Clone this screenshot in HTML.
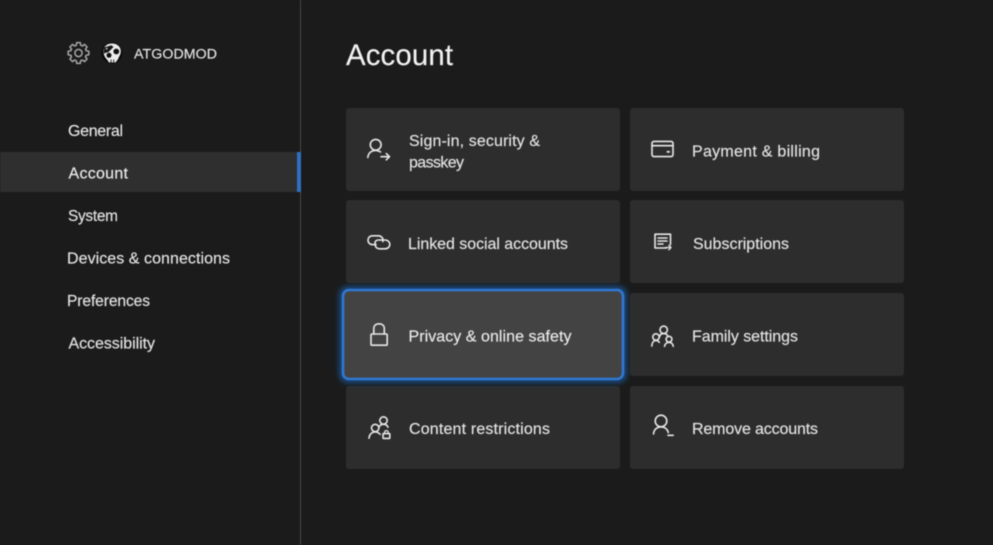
<!DOCTYPE html>
<html lang="en">
<head>
<meta charset="utf-8">
<title>Account</title>
<style>
html,body{margin:0;padding:0;width:993px;height:545px;overflow:hidden;background:#1b1b1b}
svg{display:block;filter:blur(.4px)}
text{font-family:"Liberation Sans",sans-serif;font-size:16px;fill:#e4e4e4;stroke:#e4e4e4;stroke-width:.15}
.i{fill:none;stroke:#e8e8e8;stroke-width:1.6;stroke-linecap:round;stroke-linejoin:round}
</style>
</head>
<body>
<svg width="993" height="545" viewBox="0 0 993 545" xmlns="http://www.w3.org/2000/svg">
<defs>
<filter id="glow" x="-10%" y="-20%" width="120%" height="140%"><feGaussianBlur stdDeviation="3"/></filter>
</defs>
<rect width="993" height="545" fill="#1b1b1b"/>

<!-- sidebar -->
<rect x="300" y="0" width="1" height="545" fill="#474747"/>
<rect x="0" y="152" width="300" height="40" fill="#2f2f2f"/>
<rect x="297" y="152" width="4" height="40" fill="#2f6fc4"/>

<!-- gear -->
<g class="i" style="stroke:#a8a8a8;stroke-width:1.5" transform="translate(78.5 53)">
<circle r="3.6"/>
<path d="M-2.2-7.69L-1.82-10.34L1.82-10.34L2.2-7.69A8 8 0 0 1 3.88-7"/>
<path transform="rotate(45)" d="M-2.2-7.69L-1.82-10.34L1.82-10.34L2.2-7.69A8 8 0 0 1 3.88-7"/>
<path transform="rotate(90)" d="M-2.2-7.69L-1.82-10.34L1.82-10.34L2.2-7.69A8 8 0 0 1 3.88-7"/>
<path transform="rotate(135)" d="M-2.2-7.69L-1.82-10.34L1.82-10.34L2.2-7.69A8 8 0 0 1 3.88-7"/>
<path transform="rotate(180)" d="M-2.2-7.69L-1.82-10.34L1.82-10.34L2.2-7.69A8 8 0 0 1 3.88-7"/>
<path transform="rotate(225)" d="M-2.2-7.69L-1.82-10.34L1.82-10.34L2.2-7.69A8 8 0 0 1 3.88-7"/>
<path transform="rotate(270)" d="M-2.2-7.69L-1.82-10.34L1.82-10.34L2.2-7.69A8 8 0 0 1 3.88-7"/>
<path transform="rotate(315)" d="M-2.2-7.69L-1.82-10.34L1.82-10.34L2.2-7.69A8 8 0 0 1 3.88-7"/>
</g>

<!-- avatar skull -->
<circle cx="112" cy="53" r="10.5" fill="#0a0a0a"/>
<path d="M103.5 51C103.5 46.5 107 43.5 112 43.5C117.5 43.5 121 47 120.8 51.5C120.7 55 118.7 57 117.8 59.5L115.5 62.5L109 62.5L107 59.5C105 57.5 103.5 55 103.5 51Z" fill="#ececec"/>
<path d="M104 47.5L111.5 45.2L113.5 47L108.5 52L103.8 53.5Z" fill="#141414"/>
<path d="M105 48.5L108 47.6L107 50Z" fill="#bbb"/>
<circle cx="116.3" cy="51.5" r="2.9" fill="#0e0e0e"/>
<circle cx="109" cy="55.3" r="2.5" fill="#0e0e0e"/>
<path d="M111 59.5L111 62.5M113.7 59.5L113.7 62.5" stroke="#222" stroke-width="1"/>
<text x="134" y="58.5" textLength="83" lengthAdjust="spacing" style="font-size:14.2px">ATGODMOD</text>

<!-- nav -->
<text x="68" y="136" textLength="55" lengthAdjust="spacing">General</text>
<text x="68.5" y="178.5" textLength="59.5" lengthAdjust="spacing" style="fill:#f0f0f0">Account</text>
<text x="68" y="221" textLength="50" lengthAdjust="spacing" style="font-size:15.4px">System</text>
<text x="67" y="263.5" textLength="163" lengthAdjust="spacing">Devices &amp; connections</text>
<text x="67" y="306" textLength="83" lengthAdjust="spacing" style="font-size:15.6px">Preferences</text>
<text x="68.5" y="348.5" textLength="86.5" lengthAdjust="spacing">Accessibility</text>

<!-- title -->
<text x="346" y="65" textLength="107" lengthAdjust="spacing" style="font-size:29.4px;fill:#f2f2f2;stroke:#f2f2f2">Account</text>

<!-- cards -->
<g fill="#2d2d2d">
<rect x="346" y="108" width="274" height="83" rx="3"/>
<rect x="630" y="108" width="274" height="83" rx="3"/>
<rect x="346" y="200" width="274" height="83" rx="3"/>
<rect x="630" y="200" width="274" height="83" rx="3"/>
<rect x="630" y="293" width="274" height="83" rx="3"/>
<rect x="346" y="386" width="274" height="83" rx="3"/>
<rect x="630" y="386" width="274" height="83" rx="3"/>
</g>

<!-- focused card -->
<rect x="342" y="289" width="282" height="91" rx="6" fill="none" stroke="#1f6fd0" stroke-width="5" opacity=".7" filter="url(#glow)"/>
<rect x="343" y="290" width="280" height="89" rx="6" fill="#434343" stroke="#2f78d6" stroke-width="2.6"/>

<!-- card text -->
<text x="409" y="146" textLength="131" lengthAdjust="spacing">Sign-in, security &amp;</text>
<text x="409" y="167.5" textLength="55" lengthAdjust="spacing">passkey</text>
<text x="692" y="156.5" textLength="128" lengthAdjust="spacing">Payment &amp; billing</text>
<text x="408" y="249" textLength="160" lengthAdjust="spacing">Linked social accounts</text>
<text x="693" y="249" textLength="96" lengthAdjust="spacing">Subscriptions</text>
<text x="408.5" y="341.5" textLength="163" lengthAdjust="spacing" style="fill:#ececec">Privacy &amp; online safety</text>
<text x="692" y="341.5" textLength="106" lengthAdjust="spacing">Family settings</text>
<text x="409" y="434" textLength="141" lengthAdjust="spacing">Content restrictions</text>
<text x="692" y="434" textLength="126" lengthAdjust="spacing">Remove accounts</text>

<!-- icons -->
<g class="i">
<!-- sign-in -->
<circle cx="375.7" cy="144.8" r="5.4"/>
<path d="M367.8 157.5C368.3 153.2 371.2 150.4 375.7 150.4C377.6 150.4 379.2 151 380.5 152"/>
<path d="M381 156.7H389.5M386.3 153.6L389.5 156.7L386.3 159.8"/>
<!-- linked -->
<path d="M382.8 241.5C383.6 238.4 381.6 235.8 378.5 235.8H372.5C369.8 235.8 368 237.8 368 240.2C368 242.6 369.8 244.6 372.5 244.6H376"/>
<path d="M375.2 243.4C374.6 241.4 376.4 240 378.5 240H385C387.9 240 389.8 242.1 389.8 244.4C389.8 246.8 387.9 248.8 385 248.8H380C377.4 248.8 375.7 247.3 375.2 245.4"/>
<!-- card -->
<rect x="652" y="141.4" width="21" height="15.2" rx="2"/>
<path d="M652 145.7H673"/>
<path d="M667.5 151.8H669" stroke-width="1.9"/>
<!-- subscriptions -->
<path d="M666.5 248H655V234.2H670.5V244.5"/>
<path d="M658 238H667M658 241H667M658 244H663"/>
<path d="M665.5 247.5H670.7M668.8 245.2L671 247.5L668.8 249.8" stroke-width="1.3"/>
<!-- lock -->
<rect x="371" y="334" width="16.2" height="11.2" rx="1"/>
<path d="M373.8 334V328.5C373.8 325.5 376 323.8 379 323.8C382 323.8 384.3 325.5 384.3 328.5V334"/>
<!-- family -->
<circle cx="663.7" cy="329.8" r="3.7"/>
<circle cx="656" cy="337" r="3.2"/>
<circle cx="669" cy="339.2" r="2.9"/>
<path d="M651.8 346C652 342.6 653.6 340.5 656 340.5C657.4 340.5 658.6 341.2 659.3 342.3"/>
<path d="M659.5 337C659.8 335 661.3 333.6 663.7 333.6C666 333.6 667.4 334.8 667.9 336.4"/>
<path d="M664.6 346.3C664.9 344 666.6 342.3 669 342.3C671.4 342.3 673 344 673.2 346.3"/>
<!-- content restrictions -->
<circle cx="383.5" cy="420.5" r="3.7"/>
<circle cx="375.2" cy="428" r="3.7"/>
<path d="M369 438.2C369.3 434.6 371.6 432 375.2 432C377.4 432 379 432.9 380 434.3"/>
<path d="M379.5 426.4C380.1 425.1 381.6 424.3 383.5 424.3C385.7 424.3 387.4 425.4 388 427.2"/>
<rect x="383" y="433.6" width="6.8" height="4.8" rx=".6"/>
<path d="M384.6 433.6V432.4C384.6 431.2 385.4 430.6 386.4 430.6C387.4 430.6 388.2 431.2 388.2 432.4V433.6" stroke-width="1.2"/>
<!-- remove -->
<circle cx="661" cy="421" r="5.8"/>
<path d="M653.5 434C653.9 429.7 656.8 426.9 661 426.9C664.8 426.9 667.5 429.2 668.3 432.5"/>
<path d="M668 435.3H673.2"/>
</g>
</svg>
</body>
</html>
